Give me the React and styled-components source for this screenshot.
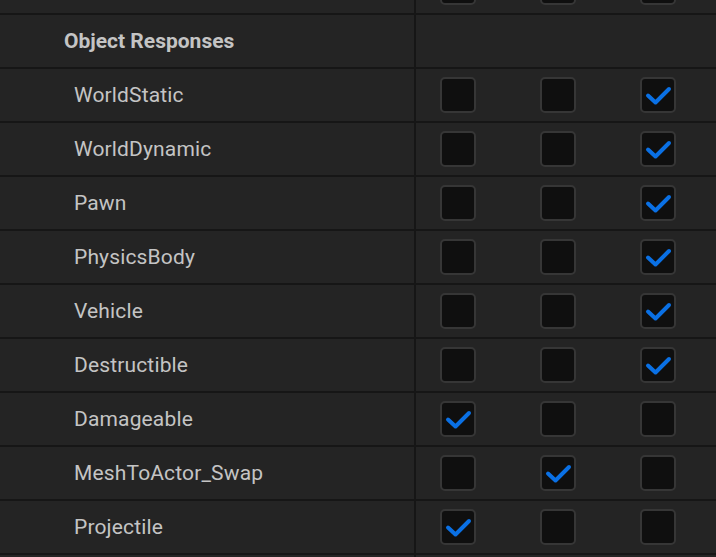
import React from "react";
import styled, { createGlobalStyle } from "styled-components";

const Global = createGlobalStyle`
  html, body {
    margin: 0;
    padding: 0;
    background: #242424;
  }
  body {
    font-family: Roboto, "Noto Sans", sans-serif;
    -webkit-font-smoothing: antialiased;
  }
`;

const Viewport = styled.div`
  width: 716px;
  height: 557px;
  overflow: hidden;
  background: #242424;
`;

/* scrolled list: the first row sits partly above the viewport */
const List = styled.div`
  display: flex;
  flex-direction: column;
  margin-top: -39px;
`;

const Row = styled.div`
  display: flex;
  height: 52px;
  border-bottom: 2px solid #161616;
`;

const NameCell = styled.div`
  width: 416px;
  flex: none;
  display: flex;
  align-items: center;
  padding-left: ${(p) => (p.$header ? 64 : 74)}px;
  box-sizing: border-box;
  border-right: 2px solid #161616;
  color: #c4c4c4;
  font-size: 21px;
  font-weight: ${(p) => (p.$header ? 700 : 400)};
  letter-spacing: ${(p) => (p.$header ? 0 : 0.15)}px;
  white-space: nowrap;
`;

const ValueCell = styled.div`
  flex: 1;
  display: flex;
  align-items: center;
  gap: 64px;
  padding-left: 24px;
`;

const Box = styled.div`
  width: 36px;
  height: 36px;
  box-sizing: border-box;
  border: 2px solid #363636;
  border-radius: 5px;
  background: #0f0f0f;
  display: flex;
  align-items: center;
  justify-content: center;
`;

const Check = () => (
  <svg width="32" height="32" viewBox="0 0 32 32">
    <path
      d="M6 16.5 L13.5 23.5 L27 10"
      fill="none"
      stroke="#0a70e4"
      strokeWidth="4"
      strokeLinecap="round"
      strokeLinejoin="round"
    />
  </svg>
);

const Checkbox = ({ on }) => <Box>{on && <Check />}</Box>;

const responses = [
  { name: "WorldStatic", value: 2 },
  { name: "WorldDynamic", value: 2 },
  { name: "Pawn", value: 2 },
  { name: "PhysicsBody", value: 2 },
  { name: "Vehicle", value: 2 },
  { name: "Destructible", value: 2 },
  { name: "Damageable", value: 0 },
  { name: "MeshToActor_Swap", value: 1 },
  { name: "Projectile", value: 0 },
];

const ResponseRow = ({ name, value }) => (
  <Row>
    <NameCell>{name}</NameCell>
    <ValueCell>
      {[0, 1, 2].map((i) => (
        <Checkbox key={i} on={value === i} />
      ))}
    </ValueCell>
  </Row>
);

export default function App() {
  return (
    <Viewport>
      <Global />
      <List>
        <ResponseRow name="" value={-1} />
        <Row>
          <NameCell $header>Object Responses</NameCell>
          <ValueCell />
        </Row>
        {responses.map((r) => (
          <ResponseRow key={r.name} {...r} />
        ))}
        <ResponseRow name="" value={-1} />
      </List>
    </Viewport>
  );
}
